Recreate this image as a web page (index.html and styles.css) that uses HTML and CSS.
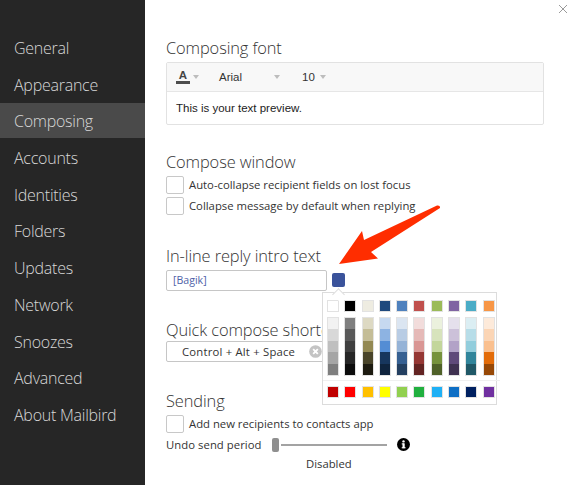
FILE: index.html
```html
<!DOCTYPE html>
<html lang="en">
<head>
<meta charset="utf-8">
<title>Composing settings</title>
<link rel="stylesheet" href="styles.css">
</head>
<body>
<div class="window">
  <nav class="sidebar">
    <a class="nav-item">General</a>
    <a class="nav-item">Appearance</a>
    <a class="nav-item active">Composing</a>
    <a class="nav-item">Accounts</a>
    <a class="nav-item">Identities</a>
    <a class="nav-item">Folders</a>
    <a class="nav-item">Updates</a>
    <a class="nav-item">Network</a>
    <a class="nav-item">Snoozes</a>
    <a class="nav-item">Advanced</a>
    <a class="nav-item">About Mailbird</a>
  </nav>
  <main class="content">
    <section class="font-section">
      <h2>Composing font</h2>
      <div class="editor">
        <div class="toolbar">
          <span class="tool-color"><span class="letter">A</span></span><i class="caret"></i>
          <span class="tool-font">Arial</span><i class="caret"></i>
          <span class="tool-size">10</span><i class="caret"></i>
        </div>
        <div class="preview">This is your text preview.</div>
      </div>
    </section>
    <section class="window-section">
      <h2>Compose window</h2>
      <label class="check"><span class="box"></span>Auto-collapse recipient fields on lost focus</label>
      <label class="check"><span class="box"></span>Collapse message by default when replying</label>
    </section>
    <section class="reply-section">
      <h2>In-line reply intro text</h2>
      <div class="reply-row">
        <div class="text-input">[Bagik]</div>
        <span class="color-btn"></span>
      </div>
    </section>
    <section class="quick-section">
      <h2>Quick compose shortcut</h2>
      <div class="shortcut">
        <span>Control + Alt + Space</span>
        <svg class="clear" width="13" height="13" viewBox="0 0 14 14"><circle cx="7" cy="7" r="6.800" fill="#c4c4c4"/><path d="M4.500 4.500l5 5M9.500 4.500l-5 5" stroke="#fff" stroke-width="2"/></svg>
      </div>
    </section>
    <section class="sending-section">
      <h2>Sending</h2>
      <label class="check"><span class="box"></span>Add new recipients to contacts app</label>
      <div class="undo-row">
        <span class="undo-label">Undo send period</span>
        <div class="slider"><span class="thumb"></span><span class="track"></span></div>
        <svg class="info" width="13" height="13" viewBox="0 0 13 13"><circle cx="6.500" cy="6.500" r="6.500" fill="#000"/><rect x="5.500" y="5.400" width="2.200" height="4.800" fill="#fff"/><rect x="4.700" y="9.200" width="3.800" height="1.100" fill="#fff"/><rect x="4.700" y="5.400" width="2.500" height="1" fill="#fff"/><circle cx="6.500" cy="3.400" r="1.200" fill="#fff"/></svg>
      </div>
      <div class="disabled">Disabled</div>
    </section>
  </main>

  <svg class="close" width="10" height="10" viewBox="0 0 10 10"><path d="M1 1l8 8M9 1l-8 8" stroke="#9a9a9a" stroke-width="1"/></svg>

  <div class="palette">
    <div class="pal-row">
      <i class="sw t0"></i><i class="sw t1"></i><i class="sw t2"></i><i class="sw t3"></i><i class="sw t4"></i><i class="sw t5"></i><i class="sw t6"></i><i class="sw t7"></i><i class="sw t8"></i><i class="sw t9"></i>
    </div>
    <div class="pal-row shades">
      <i class="col c0"></i><i class="col c1"></i><i class="col c2"></i><i class="col c3"></i><i class="col c4"></i><i class="col c5"></i><i class="col c6"></i><i class="col c7"></i><i class="col c8"></i><i class="col c9"></i>
    </div>
    <div class="pal-row standard">
      <i class="sw s0"></i><i class="sw s1"></i><i class="sw s2"></i><i class="sw s3"></i><i class="sw s4"></i><i class="sw s5"></i><i class="sw s6"></i><i class="sw s7"></i><i class="sw s8"></i><i class="sw s9"></i>
    </div>
  </div>

  <svg class="arrow" width="110" height="66" viewBox="335 203 110 66"><path d="M339 264L362 231L364 240L437 205.500Q440.500 205 440 208L371 252L378 258.500Z" fill="#ff2d00"/></svg>
</div>
</body>
</html>
```

FILE: styles.css
```css
* { box-sizing: border-box; }
html, body { margin: 0; padding: 0; }
body {
  width: 576px;
  height: 485px;
  overflow: hidden;
  background: #fff;
  font-family: "Open Sans", "Noto Sans", sans-serif;
  color: #2b2b2b;
}
.window { position: relative; display: flex; width: 576px; height: 485px; overflow: hidden; }

.sidebar {
  flex: 0 0 145px;
  display: flex;
  flex-direction: column;
  gap: 2.200px;
  padding-top: 30px;
  background: #262626;
}
.nav-item {
  display: block;
  height: 34.500px;
  line-height: 36px;
  padding-left: 14px;
  font-size: 16px;
  font-weight: 300;
  letter-spacing: -0.25px;
  color: #d8d8d8;
  white-space: nowrap;
}
.nav-item.active { background: #4a4a4a; color: #d8d8d8; }

.content { flex: 1; display: flex; flex-direction: column; padding: 38px 0 0 21px; min-width: 0; }
h2 {
  margin: 0;
  font-size: 16.400px;
  line-height: 20px;
  font-weight: 300;
  letter-spacing: -0.1px;
  color: #333;
  white-space: nowrap;
}

.editor {
  width: 378px;
  height: 63px;
  margin-top: 4px;
  border: 1px solid #e2e2e2;
  border-radius: 2px;
  background: #fff;
}
.toolbar {
  display: flex;
  align-items: center;
  height: 29px;
  padding-left: 9px;
  background: #f8f8f8;
  border-bottom: 1px solid #e6e6e6;
  font-family: "Liberation Sans", Arial, sans-serif;
  font-size: 11.500px;
  color: #333;
}
.tool-color { display: block; width: 14px; height: 14px; border-bottom: 3px solid #4d4d4d; position: relative; }
.letter { display: block; font-size: 11.500px; font-weight: 700; line-height: 11px; text-align: center; color: #444; }
.caret {
  display: block;
  width: 0;
  height: 0;
  margin-left: 3px;
  border: 3px solid transparent;
  border-top: 4px solid #bdbdbd;
  border-bottom: 0;
}
.tool-font { margin-left: 20px; width: 52px; }
.tool-size { margin-left: 22px; width: 15px; }
.preview {
  padding: 9px 9px 0;
  font-family: "Liberation Sans", Arial, sans-serif;
  font-size: 11.500px;
  line-height: 15px;
  color: #222;
}

.window-section { margin-top: 27px; }
.window-section h2 { margin-bottom: 2px; }
.check {
  display: flex;
  align-items: center;
  height: 21px;
  font-size: 11.300px;
  color: #333;
  white-space: nowrap;
}
.box {
  display: block;
  flex: 0 0 18px;
  height: 18px;
  margin-right: 5px;
  border: 1px solid #c8c8c8;
  border-radius: 2px;
  background: #fff;
}

.reply-section { margin-top: 30px; }
.reply-row { display: flex; align-items: center; margin-top: 4px; }
.text-input {
  width: 161px;
  height: 21px;
  line-height: 19px;
  padding-left: 6px;
  border: 1px solid #c6c6c6;
  border-radius: 2px;
  font-size: 10.600px;
  color: #4f63a8;
}
.color-btn { display: block; width: 13px; height: 14px; margin: -1px 0 0 5px; border-radius: 2px; background: #3a539b; }

.quick-section { margin-top: 29px; }
.shortcut {
  display: flex;
  align-items: center;
  justify-content: space-between;
  width: 165px;
  height: 21px;
  margin-top: 1px;
  padding: 0 8px 0 15px;
  border: 1px solid #c6c6c6;
  border-radius: 2px;
  font-size: 11.300px;
  letter-spacing: 0.2px;
  color: #333;
  white-space: nowrap;
}
.clear { flex: none; }

.sending-section { margin-top: 29px; }
.sending-section .check { margin-top: 2px; }
.undo-row { display: flex; align-items: center; height: 21px; font-size: 11.300px; letter-spacing: 0.05px; color: #333; }
.undo-label { width: 106px; white-space: nowrap; }
.slider { display: flex; align-items: center; width: 115px; }
.thumb { display: block; width: 7px; height: 14px; border-radius: 2px; background: #8f8f8f; }
.track { display: block; width: 107px; height: 2px; margin-left: 2px; background: #a3a3a3; }
.info { margin-left: 10px; }
.disabled { margin: 1px 0 0 140px; font-size: 11.300px; line-height: 16px; color: #333; }

.close { position: absolute; left: 558px; top: 4px; }

.palette {
  position: absolute;
  left: 322px;
  top: 292px;
  width: 175px;
  height: 113px;
  padding: 7px 0 0 4px;
  background: #fff;
  border: 1px solid #dcdcdc;
}
.palette::before {
  content: "";
  position: absolute;
  left: 11px;
  top: -3px;
  width: 8px;
  height: 8px;
  background: #fff;
  border-left: 1px solid #dcdcdc;
  border-top: 1px solid #dcdcdc;
  transform: rotate(45deg);
}
.pal-row { display: flex; gap: 5.300px; }
.sw { display: block; width: 12px; height: 12px; border: 1px solid #e2e2e2; }
.col { display: block; width: 12px; height: 59px; border: 1px solid #e2e2e2; }
.shades { margin-top: 5px; }
.standard { margin: 4px -4px 0; padding: 5px 0 0 4px; border-top: 1px solid #f0f0f0; }

.t0 { background: #fff; } .t1 { background: #000; } .t2 { background: #eeece1; } .t3 { background: #1f497d; } .t4 { background: #4f81bd; }
.t5 { background: #c0504d; } .t6 { background: #9bbb59; } .t7 { background: #8064a2; } .t8 { background: #4bacc6; } .t9 { background: #f79646; }
.s0 { background: #c00000; } .s1 { background: #ff0000; } .s2 { background: #ffc000; } .s3 { background: #ffff00; } .s4 { background: #92d050; }
.s5 { background: #21b03f; } .s6 { background: #1fb0f5; } .s7 { background: #0e6fc5; } .s8 { background: #002060; } .s9 { background: #7030a0; }
.c0 { background: linear-gradient(#f2f2f2 20%, #d8d8d8 20% 40%, #bfbfbf 40% 60%, #a5a5a5 60% 80%, #7f7f7f 80%); }
.c1 { background: linear-gradient(#7f7f7f 20%, #595959 20% 40%, #3f3f3f 40% 60%, #262626 60% 80%, #0c0c0c 80%); }
.c2 { background: linear-gradient(#ddd9c3 20%, #c4bd97 20% 40%, #938953 40% 60%, #494429 60% 80%, #1d1b10 80%); }
.c3 { background: linear-gradient(#c6d9f0 20%, #8db3e2 20% 40%, #548dd4 40% 60%, #17365d 60% 80%, #0f243e 80%); }
.c4 { background: linear-gradient(#dbe5f1 20%, #b8cce4 20% 40%, #95b3d7 40% 60%, #366092 60% 80%, #244061 80%); }
.c5 { background: linear-gradient(#f2dcdb 20%, #e5b9b7 20% 40%, #d99694 40% 60%, #953734 60% 80%, #632423 80%); }
.c6 { background: linear-gradient(#ebf1dd 20%, #d7e3bc 20% 40%, #c3d69b 40% 60%, #76923c 60% 80%, #4f6128 80%); }
.c7 { background: linear-gradient(#e5e0ec 20%, #ccc1d9 20% 40%, #b2a2c7 40% 60%, #5f497a 60% 80%, #3f3151 80%); }
.c8 { background: linear-gradient(#dbeef3 20%, #b7dde8 20% 40%, #92cddc 40% 60%, #31859b 60% 80%, #205867 80%); }
.c9 { background: linear-gradient(#fdeada 20%, #fbd5b5 20% 40%, #fac08f 40% 60%, #e36c09 60% 80%, #974806 80%); }

.arrow { position: absolute; left: 335px; top: 203px; }
```
